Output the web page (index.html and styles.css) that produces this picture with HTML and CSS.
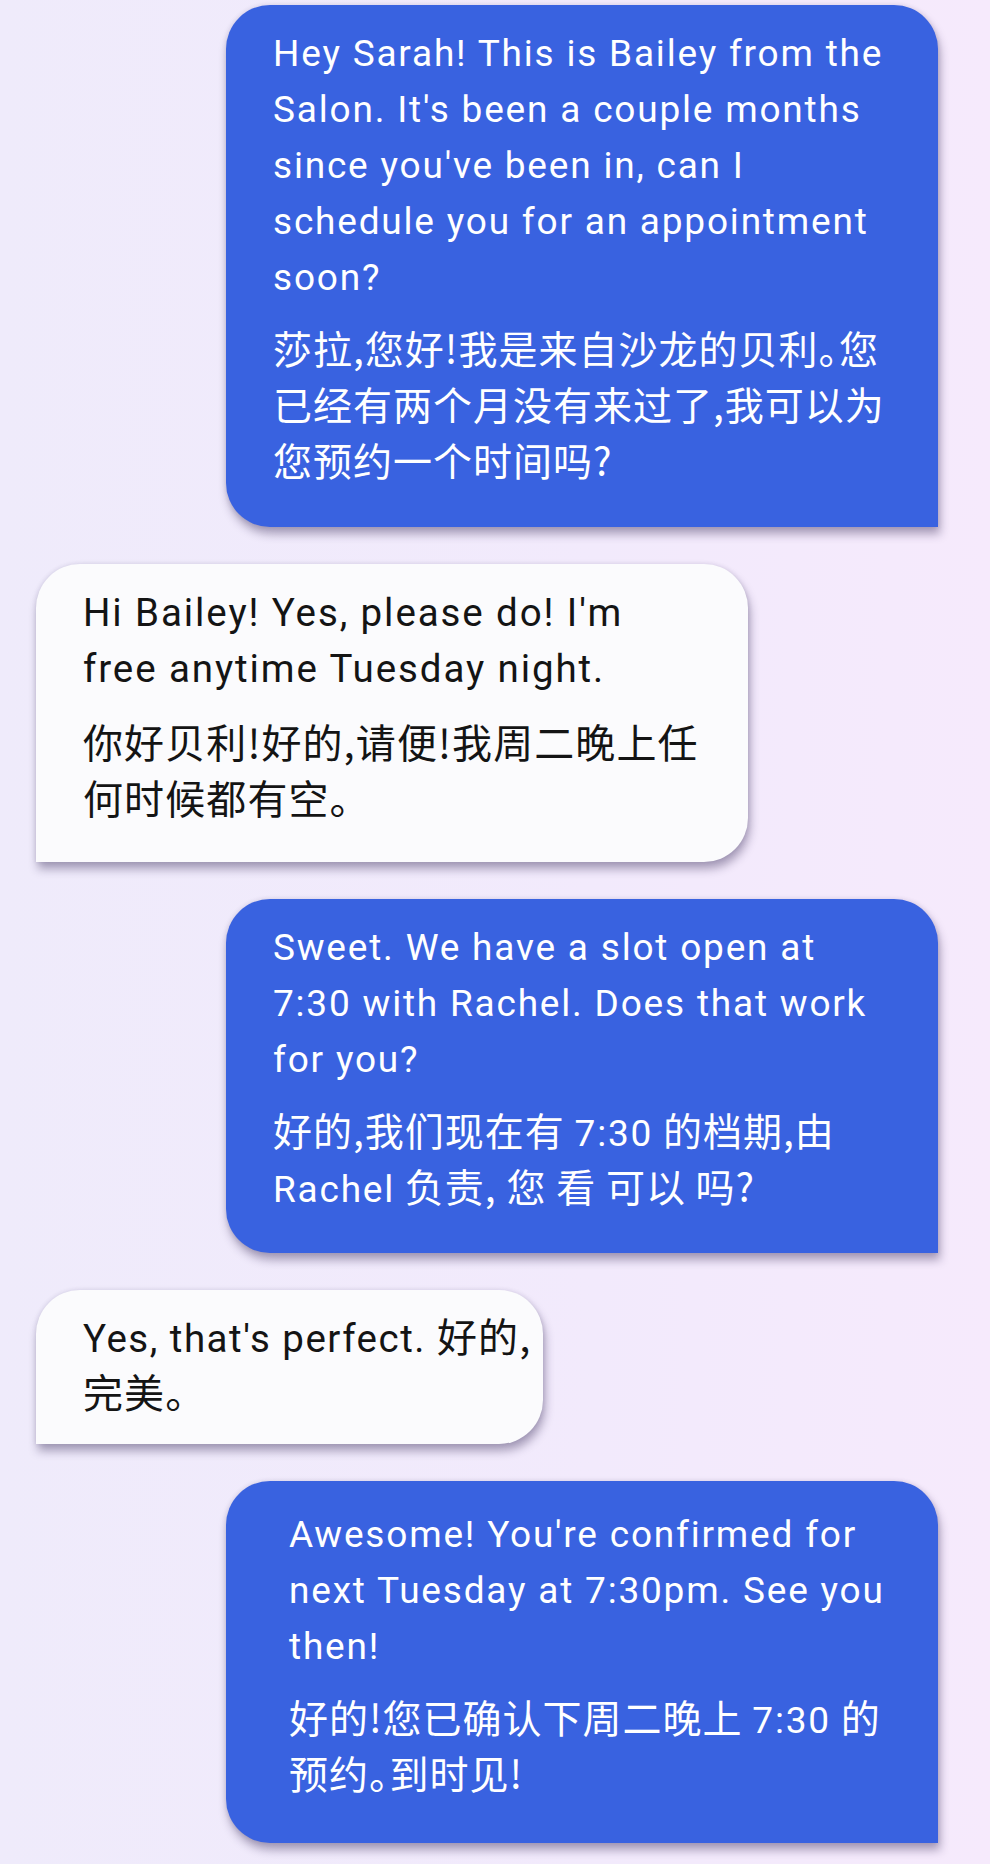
FILE: index.html
```html
<!DOCTYPE html>
<html lang="en">
<head>
<meta charset="utf-8">
<title>Salon chat</title>
<link rel="stylesheet" href="styles.css">
</head>
<body>
<main class="thread">
  <div class="msg sent">
    <p class="en">Hey Sarah! This is Bailey from the Salon. It's been a couple months since you've been in, can I schedule you for an appointment soon?</p>
    <p class="zh">莎拉,您好!我是来自沙龙的贝利。您已经有两个月没有来过了,我可以为您预约一个时间吗?</p>
  </div>
  <div class="msg received">
    <p class="en">Hi Bailey! Yes, please do! I'm free anytime Tuesday night.</p>
    <p class="zh">你好贝利!好的,请便!我周二晚上任何时候都有空。</p>
  </div>
  <div class="msg sent">
    <p class="en">Sweet. We have a slot open at 7:30 with Rachel. Does that work for you?</p>
    <p class="zh">好的,我们现在有 <span class="en">7:30</span> 的档期,由 <span class="en">Rachel</span> 负责, 您 看 可以 吗?</p>
  </div>
  <div class="msg received narrow">
    <p class="en">Yes, that's perfect. <span class="zh">好的,</span> <span class="zh">完美。</span></p>
  </div>
  <div class="msg sent indented">
    <p class="en">Awesome! You're confirmed for next Tuesday at 7:30pm. See you then!</p>
    <p class="zh">好的!您已确认下周二晚上 <span class="en">7:30</span> 的<wbr><span>预约。到时见!</span></p>
  </div>
</main>
</body>
</html>
```

FILE: styles.css
```css
html, body {
  margin: 0;
  padding: 0;
}

body {
  min-height: 1864px;
  background: linear-gradient(to right, #efebfb 0%, #f2eafc 60%, #f6eafc 100%);
  font-family: Roboto, "Noto Sans CJK SC", sans-serif;
}

.thread {
  display: flex;
  flex-direction: column;
  gap: 37px;
  padding: 5px 52px 20px 36px;
}

.msg {
  box-sizing: border-box;
  width: 712px;
  padding: 21px 47px 37px 47px;
  border-radius: 44px;
  box-shadow: 2px 7px 10px rgba(45, 32, 80, 0.38), 0 0 5px rgba(45, 32, 80, 0.12);
}

.msg p {
  margin: 0;
  line-height: 56px;
}

.msg p + p {
  margin-top: 16px;
}

.sent {
  align-self: flex-end;
  background: #3962e0;
  color: #ffffff;
  border-bottom-right-radius: 0;
  padding-bottom: 40px;
}

.sent p + p {
  margin-top: 13px;
}

.received {
  align-self: flex-start;
  background: #fbfbfd;
  color: #141414;
  border-bottom-left-radius: 0;
}

.narrow {
  width: 507px;
  padding: 21px 0 21px 47px;
}

.indented {
  padding: 26px 36px 43px 63px;
}

.en {
  font-family: Roboto, "Noto Sans CJK SC", sans-serif;
  font-size: 37px;
  letter-spacing: 1.8px;
}

.zh {
  font-family: "Noto Sans CJK SC", sans-serif;
  font-size: 39px;
  letter-spacing: 1px;
  font-feature-settings: "halt" 1;
}

.received .en {
  font-size: 38.5px;
  letter-spacing: 1.9px;
}

.received .zh {
  font-size: 40px;
  letter-spacing: 1.1px;
}

.narrow .en {
  letter-spacing: 1.5px;
}

.zh .en,
.en .zh {
  line-height: 1;
}
```
